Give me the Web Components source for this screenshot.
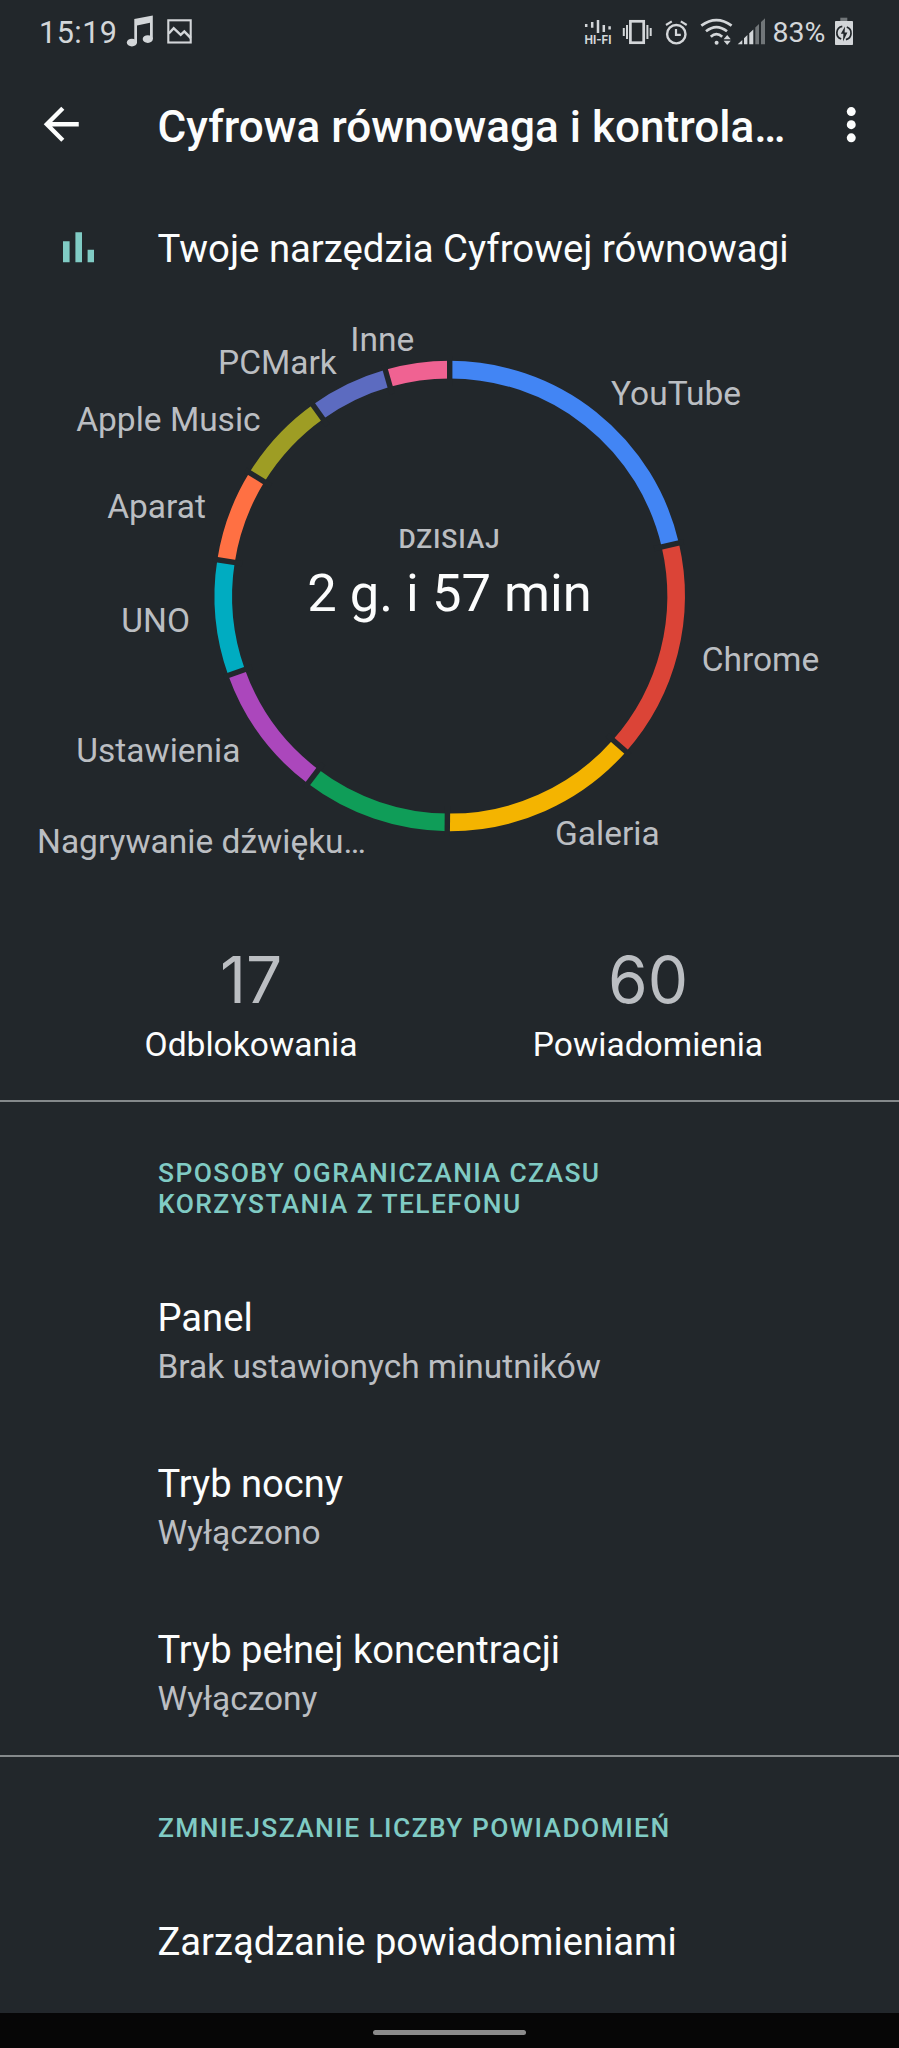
<!DOCTYPE html>
<html lang="pl">
<head>
<meta charset="utf-8">
<title>Cyfrowa równowaga i kontrola rodzicielska</title>
<style>
    html, body {
        margin: 0;
        background: #22272b;
    }
    body {
        font-family: Roboto, "Liberation Sans", sans-serif;
        --fg: #fcfdfd;
        --muted: #bbbec2;
        --accent: #80cbc4;
        --line: #85898b;
        --bg: #22272b;
        --inset: 157.5px;
    }
</style>
</head>
<body>
<phone-screen>
    <status-bar slot="top" time="15:19" battery="83%"></status-bar>
    <app-toolbar>Cyfrowa równowaga i kontrola…</app-toolbar>
    <tool-header>Twoje narzędzia Cyfrowej równowagi</tool-header>
    <usage-chart caption="DZISIAJ" total="2 g. i 57 min"></usage-chart>
    <stat-row>
        <stat-item value="17">Odblokowania</stat-item>
        <stat-item value="60">Powiadomienia</stat-item>
    </stat-row>
    <pref-group>
        <span slot="title">SPOSOBY OGRANICZANIA CZASU<br>KORZYSTANIA Z TELEFONU</span>
        <pref-item summary="Brak ustawionych minutników">Panel</pref-item>
        <pref-item summary="Wyłączono">Tryb nocny</pref-item>
        <pref-item summary="Wyłączony">Tryb pełnej koncentracji</pref-item>
    </pref-group>
    <pref-group>
        <span slot="title">ZMNIEJSZANIE LICZBY POWIADOMIEŃ</span>
        <pref-item>Zarządzanie powiadomieniami</pref-item>
    </pref-group>
    <nav-bar slot="bottom"></nav-bar>
</phone-screen>

<script>
class PhoneScreen extends HTMLElement {
    constructor() {
        super();
        this.attachShadow({ mode: "open" });
        this.shadowRoot.innerHTML = `
        <style>
          :host {
            display: flex;
            flex-direction: column;
            height: 2048px;
            overflow: hidden;
            background: var(--bg);
            color: var(--fg);
          }
          main {
            flex: 1;
            min-height: 0;
            overflow: hidden;
          }
        </style>
        <slot name="top"></slot>
        <main><slot></slot></main>
        <slot name="bottom"></slot>
      `;
    }
}

class StatusBar extends HTMLElement {
    constructor() {
        super();
        this.attachShadow({ mode: "open" });
    }

    connectedCallback() {
        this.shadowRoot.innerHTML = `
        <style>
          :host {
            display: flex;
            justify-content: space-between;
            box-sizing: border-box;
            height: 65px;
            padding: 0 43px 0 39px;
            color: #d3d6d9;
          }
          .side {
            display: flex;
            align-items: center;
          }
          .time {
            width: 87px;
            font-size: 30.6px;
            letter-spacing: 0.45px;
          }
          .level {
            width: 60.5px;
            font-size: 28.5px;
            line-height: 64px;
          }
          svg {
            display: block;
            height: 41px;
            fill: currentColor;
          }
          .stroke {
            fill: none;
            stroke: currentColor;
          }
          .dim { opacity: 0.45; }
        </style>
        <div class="side">
          <span class="time">${this.getAttribute("time")}</span>
          <svg width="40" viewBox="0 0 40 41">
            <path d="M8.3 7 26.8 3.5V27H24V10.8L11 13.4V31H8.3z"/>
            <ellipse cx="5.9" cy="30.6" rx="5.1" ry="3.9"/>
            <ellipse cx="21.8" cy="27.1" rx="5.1" ry="3.9"/>
          </svg>
          <svg width="28" viewBox="0 0 28 41">
            <rect class="stroke" x="2.3" y="8.3" width="22.4" height="22.2" stroke-width="2.1"/>
            <path class="stroke" d="M2.8 21.5 7.7 16.2 14.7 22.8 18.3 19.4 24.8 26" stroke-width="2.5"/>
          </svg>
        </div>
        <div class="side">
          <svg width="37" viewBox="0 0 37 41">
            <path class="stroke" d="M2.2 12v3M8.2 10v5.8M14 8v13M19.8 13v7M25.6 14.3v3.2" stroke-width="2.5"/>
            <text x="0.4" y="31.8" font-family="Inter, sans-serif" font-size="12" font-weight="700" textLength="27" lengthAdjust="spacingAndGlyphs">HI-FI</text>
          </svg>
          <svg width="42" viewBox="0 0 42 41">
            <rect class="stroke" x="9.4" y="9.3" width="13.3" height="21.4" stroke-width="2.7"/>
            <path class="stroke" d="M6 13v14M2.8 16v8M26.4 13v14M29.7 16v8" stroke-width="2"/>
          </svg>
          <svg width="36" viewBox="0 0 36 41">
            <circle class="stroke" cx="13.3" cy="22.2" r="9.2" stroke-width="2.4"/>
            <path class="stroke" d="M13 17V22.8H17.8M3 13 8.8 9.4M17.8 9.4 23.7 13" stroke-width="2.2"/>
          </svg>
          <svg width="37" viewBox="0 0 37 41">
            <path class="stroke" d="M2.3 13.7Q17.4 2.7 32.6 13.7M7 19.3Q17.4 10.8 28 19.3M11.8 24.8Q17.4 19.4 23.2 24.8" stroke-width="2.7"/>
            <circle cx="17.6" cy="30.8" r="2"/>
            <path d="M24.6 27.2h7.2L28.2 23zM24.6 28.8h7.2L28.2 33z"/>
          </svg>
          <svg width="36.5" viewBox="0 0 36.5 41">
            <path d="M1.7 32.3 6.3 27.9V32.3zM8 26.3 11.4 23.1V32.3H8zM13.3 21.3 17.3 17.4V32.3H13.3z"/>
            <path class="dim" d="M19.3 15.5 23 12V32.3H19.3zM25 10.1 29 6.3V32.3H25z"/>
          </svg>
          <span class="level">${this.getAttribute("battery")}</span>
          <svg width="23" viewBox="0 0 23 41">
            <path class="dim" d="M7.3 5.7H14.3V9H7.3z"/>
            <rect x="2" y="9" width="18" height="24" rx="0.8"/>
            <path d="M9.3 14.3A6.6 6.6 0 0 0 8.2 27M12.9 27.6A6.6 6.6 0 0 0 13.8 15" fill="none" stroke="#22272b" stroke-width="1.7"/>
            <path d="M12 14.6 7.8 21.8H10.4L10 29.4 14.4 20.5H11.6z" fill="#22272b"/>
          </svg>
        </div>
      `;
    }
}

class AppToolbar extends HTMLElement {
    constructor() {
        super();
        this.attachShadow({ mode: "open" });
        this.shadowRoot.innerHTML = `
        <style>
          :host {
            display: grid;
            grid-template-columns: var(--inset) 1fr 74px;
            align-items: center;
            height: 119px;
          }
          svg {
            display: block;
            width: 52.5px;
            height: 52.5px;
            fill: currentColor;
          }
          .back { margin-left: 35px; }
          h1 {
            margin: 0;
            padding-top: 5px;
            font-size: 44.1px;
            font-weight: 500;
            line-height: 54px;
            white-space: nowrap;
          }
        </style>
        <svg class="back" viewBox="0 0 24 24"><path d="M20 11H7.83l5.59-5.59L12 4l-8 8 8 8 1.41-1.41L7.83 13H20v-2z"/></svg>
        <h1><slot></slot></h1>
        <svg viewBox="0 0 24 24"><circle cx="12" cy="6.2" r="2.05"/><circle cx="12" cy="12.2" r="2.05"/><circle cx="12" cy="18.2" r="2.05"/></svg>
      `;
    }
}

class ToolHeader extends HTMLElement {
    constructor() {
        super();
        this.attachShadow({ mode: "open" });
        this.shadowRoot.innerHTML = `
        <style>
          :host {
            display: grid;
            grid-template-columns: 94.5px 1fr;
            align-items: center;
            height: 128px;
            padding-left: 63px;
            font-size: 38.3px;
            white-space: nowrap;
          }
          svg {
            display: block;
            fill: var(--accent);
          }
        </style>
        <svg width="32" height="32" viewBox="0 0.7 32 32"><path d="M0 10H6.6V31H0zM12.4 1H19V31H12.4zM24.6 18.5H31V31H24.6z"/></svg>
        <span><slot></slot></span>
      `;
    }
}

// from/to are clockwise degrees, 0 is the top of the ring
const APPS = [
    { name: "YouTube", color: "#4285f4", from: 0, to: 76.97, x: 611, y: 57.7 },
    { name: "Chrome", color: "#db4437", from: 76.97, to: 131.44, x: 701.7, y: 323.6 },
    { name: "Galeria", color: "#f4b400", from: 131.44, to: 180.6, x: 555, y: 497.6 },
    { name: "Nagrywanie dźwięku…", color: "#0f9d58", from: 180.6, to: 217.09, x: 37, y: 506 },
    { name: "Ustawienia", color: "#ab47bc", from: 217.09, to: 250.26, x: 76.3, y: 415 },
    { name: "UNO", color: "#00acc1", from: 250.26, to: 278.87, x: 121.3, y: 285 },
    { name: "Aparat", color: "#ff7043", from: 278.87, to: 301.64, x: 107.2, y: 170.6 },
    { name: "Apple Music", color: "#9e9d24", from: 301.64, to: 324.41, x: 76.2, y: 83.5 },
    { name: "PCMark", color: "#5c6bc0", from: 324.41, to: 344.11, x: 218, y: 27 },
    { name: "Inne", color: "#f06292", from: 344.11, to: 360, x: 350.3, y: 4 },
];

class UsageChart extends HTMLElement {
    constructor() {
        super();
        this.attachShadow({ mode: "open" });
    }

    connectedCallback() {
        this.shadowRoot.innerHTML = `
        <style>
          :host {
            display: grid;
            position: relative;
            height: 588px;
            grid-template-columns: 899px;
            grid-template-rows: 588px;
          }
          svg, .center {
            grid-area: 1 / 1;
          }
          .center {
            display: flex;
            flex-direction: column;
            align-items: center;
            padding-top: 211px;
          }
          .caption {
            color: var(--muted);
            font-size: 26.4px;
            font-weight: 500;
            line-height: 32px;
            letter-spacing: 0.85px;
          }
          .total {
            font-size: 52.5px;
            line-height: 77px;
          }
          .label {
            position: absolute;
            margin-top: 4px;
            color: var(--muted);
            font-size: 33.5px;
            line-height: 40px;
            white-space: nowrap;
          }
          .gap {
            stroke: var(--bg);
            stroke-width: 5.4;
          }
        </style>
        <svg width="899" height="588" viewBox="0 -4 899 588"></svg>
        <div class="center">
          <span class="caption">${this.getAttribute("caption")}</span>
          <span class="total">${this.getAttribute("total")}</span>
        </div>
      `;
        this._render();
    }

    _point(deg, r) {
        const a = (deg * Math.PI) / 180;
        return `${(449.7 + r * Math.sin(a)).toFixed(2)} ${(280 - r * Math.cos(a)).toFixed(2)}`;
    }

    _render() {
        const r = 226.4;
        let arcs = "";
        let gaps = "";
        APPS.forEach((app) => {
            arcs += `<path d="M${this._point(app.from, r)}A${r} ${r} 0 0 1 ${this._point(app.to, r)}" fill="none" stroke="${app.color}" stroke-width="17.6"/>`;
            gaps += `<path class="gap" d="M${this._point(app.from, 210)}L${this._point(app.from, 240)}"/>`;
            const label = document.createElement("span");
            label.className = "label";
            label.textContent = app.name;
            label.style.left = app.x + "px";
            label.style.top = app.y + "px";
            this.shadowRoot.appendChild(label);
        });
        this.shadowRoot.querySelector("svg").innerHTML = arcs + gaps;
    }
}

class StatRow extends HTMLElement {
    constructor() {
        super();
        this.attachShadow({ mode: "open" });
        this.shadowRoot.innerHTML = `
        <style>
          :host {
            display: grid;
            grid-template-columns: 1fr 1fr;
            box-sizing: border-box;
            height: 200px;
            padding: 40px 52.5px 0 52.5px;
          }
        </style>
        <slot></slot>
      `;
    }
}

class StatItem extends HTMLElement {
    constructor() {
        super();
        this.attachShadow({ mode: "open" });
    }

    connectedCallback() {
        this.shadowRoot.innerHTML = `
        <style>
          :host {
            display: flex;
            flex-direction: column;
            align-items: center;
            font-size: 33.6px;
            line-height: 52px;
          }
          .value {
            color: var(--muted);
            font: 400 64px/79px Inter, Roboto, sans-serif;
          }
        </style>
        <span class="value">${this.getAttribute("value")}</span>
        <span><slot></slot></span>
      `;
    }
}

class PrefGroup extends HTMLElement {
    constructor() {
        super();
        this.attachShadow({ mode: "open" });
        this.shadowRoot.innerHTML = `
        <style>
          :host {
            display: block;
            border-top: 2px solid var(--line);
          }
          .title {
            padding: 55.5px 0 37px var(--inset);
            color: var(--accent);
            font-size: 26.4px;
            font-weight: 500;
            line-height: 31px;
            letter-spacing: 1.42px;
            margin-left: 0.5px;
          }
        </style>
        <div class="title"><slot name="title"></slot></div>
        <slot></slot>
      `;
    }
}

class PrefItem extends HTMLElement {
    constructor() {
        super();
        this.attachShadow({ mode: "open" });
    }

    connectedCallback() {
        const summary = this.getAttribute("summary");
        this.shadowRoot.innerHTML = `
        <style>
          :host {
            display: flex;
            flex-direction: column;
            box-sizing: border-box;
            min-height: 129.5px;
            padding: 36px 0 33.3px var(--inset);
            font-size: 38.15px;
            line-height: 50px;
          }
          .summary {
            color: var(--muted);
            font-size: 33.45px;
            line-height: 47px;
          }
        </style>
        <span><slot></slot></span>
        ${summary ? `<span class="summary">${summary}</span>` : ""}
      `;
    }
}

class NavBar extends HTMLElement {
    constructor() {
        super();
        this.attachShadow({ mode: "open" });
        this.shadowRoot.innerHTML = `
        <style>
          :host {
            display: flex;
            justify-content: center;
            height: 35px;
            background: #060606;
          }
          .pill {
            width: 153px;
            height: 5.5px;
            margin-top: 16.5px;
            border-radius: 3px;
            background: #8b8b8b;
          }
        </style>
        <div class="pill"></div>
      `;
    }
}

customElements.define("phone-screen", PhoneScreen);
customElements.define("status-bar", StatusBar);
customElements.define("app-toolbar", AppToolbar);
customElements.define("tool-header", ToolHeader);
customElements.define("usage-chart", UsageChart);
customElements.define("stat-row", StatRow);
customElements.define("stat-item", StatItem);
customElements.define("pref-group", PrefGroup);
customElements.define("pref-item", PrefItem);
customElements.define("nav-bar", NavBar);
</script>
</body>
</html>
